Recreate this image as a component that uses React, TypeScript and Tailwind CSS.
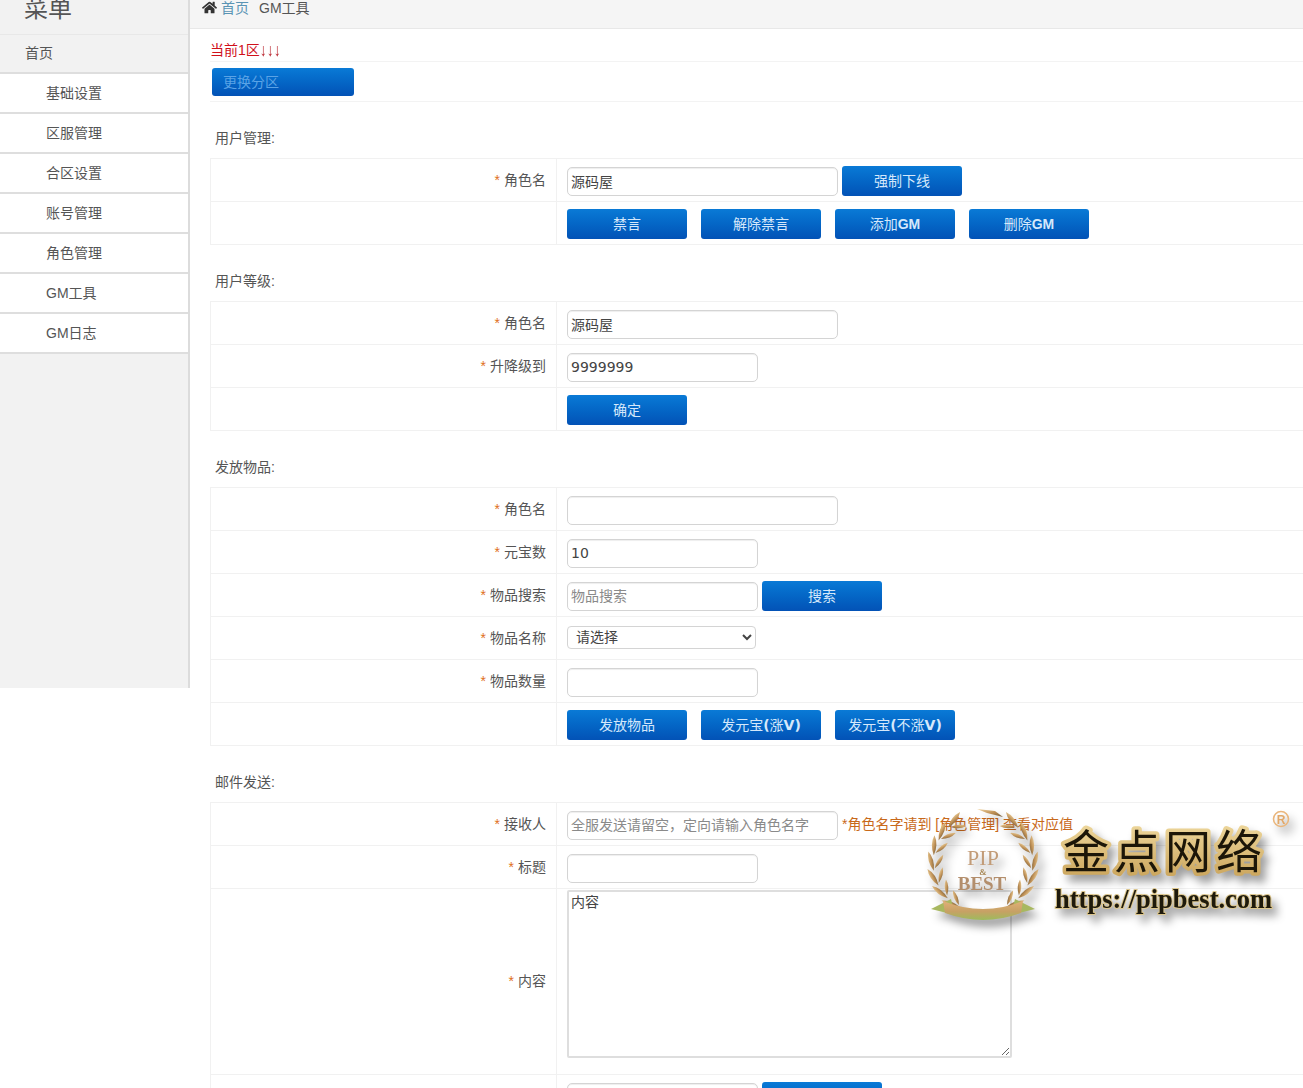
import React from 'react';
import { FaHome } from 'react-icons/fa';

const FONT = "font-['Liberation_Sans','Noto_Sans_CJK_SC',sans-serif]";

const menu = ['基础设置', '区服管理', '合区设置', '账号管理', '角色管理', 'GM工具', 'GM日志'];

const Btn = ({ children }: { children?: React.ReactNode }) => (
  <button className="h-[30px] w-[120px] shrink-0 rounded-[3px] bg-gradient-to-b from-[#0a7ad6] to-[#0352b6] text-center text-[14px] leading-[30px] text-[#d5e8fb]">
    {children}
  </button>
);

const B = ({ children }: { children: React.ReactNode }) => (
  <span className="font-['DejaVu_Sans'] font-bold">{children}</span>
);

const G = ({ children }: { children: React.ReactNode }) => <span className="font-bold">{children}</span>;

const TextInput = ({ value, placeholder, wide }: { value?: string; placeholder?: string; wide?: boolean }) => (
  <input
    readOnly
    value={value ?? ''}
    placeholder={placeholder}
    className={`h-[29px] rounded-[5px] border border-[#d4d4d4] bg-white px-[3px] font-['DejaVu_Sans','Noto_Sans_CJK_SC',sans-serif] text-[14px] text-[#444] shadow-[inset_0_1px_1px_#eeeeee] outline-none placeholder:text-[#8a8a8a] ${
      wide ? 'w-[271px]' : 'w-[191px]'
    }`}
  />
);

const Row = ({ label, children, tall }: { label?: string; children: React.ReactNode; tall?: boolean }) => (
  <div className={`flex border-b border-[#f1f1f1] ${tall ? 'h-[186px]' : 'h-[43px]'}`}>
    <div className="flex w-[346px] shrink-0 items-center justify-end border-r border-[#f1f1f1] pr-[10px] text-[14px] text-[#555]">
      {label && (
        <>
          <span className="mr-[4px] text-[#e0701a]">*</span>
          {label}
        </>
      )}
    </div>
    <div className="flex flex-1 items-center gap-[4px] pl-[10px] pt-[2px]">{children}</div>
  </div>
);

const Section = ({ title, children }: { title: string; children: React.ReactNode }) => (
  <section>
    <h3 className="flex h-[56px] items-center pl-[5px] pt-[16px] text-[14px] font-normal text-[#555]">{title}:</h3>
    <div className="w-[1200px] border-t border-l border-[#f1f1f1]">{children}</div>
  </section>
);

const ButtonRow = ({ labels }: { labels: React.ReactNode[] }) => (
  <Row>
    <div className="flex gap-[14px]">
      {labels.map((l, i) => (
        <Btn key={i}>{l}</Btn>
      ))}
    </div>
  </Row>
);

const leafPath = 'M0 -10 Q4.5 -1 0 10 Q-4.5 -1 0 -10 Z';
const arc = [34, 52, 70, 88, 106, 124, 142];

const WreathSide = () => (
  <>
    {arc.map((t) => {
      const a = (t * Math.PI) / 180;
      const sx = -Math.sin(a);
      const cy = -Math.cos(a);
      const rot = 90 - t;
      return (
        <g key={t}>
          <path d={leafPath} fill="url(#leaf)" transform={`translate(${sx * 52} ${cy * 52}) rotate(${rot - 18})`} />
          <path d={leafPath} fill="url(#leaf)" transform={`translate(${sx * 44} ${cy * 44}) rotate(${rot + 30}) scale(0.8)`} />
        </g>
      );
    })}
  </>
);

const Watermark = () => (
  <div className="pointer-events-none absolute left-[925px] top-[805px] h-[135px] w-[378px]">
    <svg width="378" height="135" viewBox="0 0 378 135" className="drop-shadow-[5px_7px_4px_rgba(0,0,0,0.38)]">
      <defs>
        <linearGradient id="leaf" x1="0" y1="0" x2="1" y2="1">
          <stop offset="0" stopColor="#f1d6a2" />
          <stop offset="0.55" stopColor="#bd8f55" />
          <stop offset="1" stopColor="#6f5836" />
        </linearGradient>
        <linearGradient id="ribbon" x1="0" y1="0" x2="0" y2="1">
          <stop offset="0" stopColor="#e0b078" />
          <stop offset="0.55" stopColor="#c7a165" />
          <stop offset="1" stopColor="#9dbb5c" />
        </linearGradient>
        <linearGradient id="gold" x1="0" y1="0" x2="0" y2="1">
          <stop offset="0" stopColor="#f3dfa6" />
          <stop offset="1" stopColor="#c9a258" />
        </linearGradient>
      </defs>
      <g transform="translate(58 58)">
        <WreathSide />
        <g transform="scale(-1 1)">
          <WreathSide />
        </g>
        <path d="M-6 -54 L12 -52 L20 -46 L4 -50 Z" fill="url(#leaf)" />
        <path d="M-52 46 L-32 36 L-28 52 Z M52 46 L32 36 L28 52 Z" fill="#a8b860" />
        <path d="M-40 38 Q0 54 40 38 L38 50 Q0 64 -38 50 Z" fill="url(#ribbon)" />
      </g>
      <text x="58" y="60" textAnchor="middle" fontFamily="'Liberation Serif',serif" fontSize="22" fill="#c29c78">PIP</text>
      <text x="58" y="70" textAnchor="middle" fontFamily="'Liberation Serif',serif" fontSize="9" fontWeight="700" fill="#a98a5a">&amp;</text>
      <text x="57" y="85" textAnchor="middle" fontFamily="'Liberation Serif',serif" fontSize="19" fontWeight="700" fill="#b38e6c">BEST</text>
      <text
        x="138"
        y="63"
        fontFamily="'Noto Sans CJK SC',sans-serif"
        fontSize="46"
        fontWeight="400"
        letterSpacing="5"
        fill="#1c1608"
        stroke="url(#gold)"
        strokeWidth="7"
        strokeLinejoin="round"
        paintOrder="stroke"
      >
        金点网络
      </text>
      <text x="130" y="103" fontFamily="'Liberation Serif',serif" fontSize="26.5" fontWeight="700" fill="#1e1a0c" stroke="#dcc68e" strokeWidth="2" paintOrder="stroke">
        https://pipbest.com
      </text>
      <circle cx="356" cy="14" r="7.5" fill="none" stroke="#eab67c" strokeWidth="1.6" />
      <text x="356" y="18.5" textAnchor="middle" fontFamily="'Liberation Sans',sans-serif" fontSize="12" fontWeight="700" fill="#e2a868">R</text>
    </svg>
  </div>
);

const App = () => {
  return (
    <div className={`relative flex h-[1088px] w-[1303px] overflow-hidden bg-white ${FONT}`}>
      <aside className="h-[688px] w-[190px] shrink-0 border-r-2 border-[#dcdcdc] bg-[#f2f2f2]">
        <div className="flex h-[35px] items-end overflow-hidden border-b border-[#e8e8e8] pb-[5px] pl-[24px] text-[24px] leading-[40px] text-[#555]">
          菜单
        </div>
        <div className="flex h-[39px] items-center border-b-2 border-[#dedede] pl-[25px] text-[14px] text-[#555]">首页</div>
        {menu.map((m) => (
          <div key={m} className="flex h-[40px] items-center border-b-2 border-[#dedede] bg-white pl-[46px] text-[14px] text-[#555]">
            {m}
          </div>
        ))}
      </aside>

      <main className="min-w-0 flex-1">
        <div className="flex h-[29px] items-start border-b border-[#e8e8e8] bg-[#f5f5f5] pl-[12px] text-[14px] leading-[16px]">
          <FaHome size={15} className="text-[#333]" />
          <span className="ml-[4px] text-[#5a94b4]">首页</span>
          <span className="ml-[10px] text-[#555]">GM工具</span>
        </div>

        <div className="pl-[20px]">
          <div className="flex h-[33px] w-[1200px] items-center border-b border-[#f3f3f3] pt-[10px] text-[14px] text-[#d0101a]">
            当前1区<span className="inline-block origin-center scale-y-125 font-bold text-[#b8202a]">↓↓↓</span>
          </div>
          <div className="flex h-[40px] w-[1200px] items-center border-b border-[#f3f3f3] pl-[2px]">
            <div className="flex h-[28px] w-[142px] items-center rounded-[3px] bg-gradient-to-b from-[#0a7ad6] to-[#0352b6] pl-[11px] pt-[1px] text-[14px] text-[#5aa3e6]">
              更换分区
            </div>
          </div>

          <Section title="用户管理">
            <Row label="角色名">
              <TextInput wide value="源码屋" />
              <Btn>强制下线</Btn>
            </Row>
            <ButtonRow
              labels={[
                '禁言',
                '解除禁言',
                <>
                  添加<G>GM</G>
                </>,
                <>
                  删除<G>GM</G>
                </>,
              ]}
            />
          </Section>

          <Section title="用户等级">
            <Row label="角色名">
              <TextInput wide value="源码屋" />
            </Row>
            <Row label="升降级到">
              <TextInput value="9999999" />
            </Row>
            <ButtonRow labels={['确定']} />
          </Section>

          <Section title="发放物品">
            <Row label="角色名">
              <TextInput wide />
            </Row>
            <Row label="元宝数">
              <TextInput value="10" />
            </Row>
            <Row label="物品搜索">
              <TextInput placeholder="物品搜索" />
              <Btn>搜索</Btn>
            </Row>
            <Row label="物品名称">
              <select className="h-[23px] w-[189px] -translate-y-[2px] rounded-[4px] border border-[#d4d4d4] bg-white pl-[4px] text-[14px] text-[#444]">
                <option>请选择</option>
              </select>
            </Row>
            <Row label="物品数量">
              <TextInput />
            </Row>
            <ButtonRow
              labels={[
                '发放物品',
                <>
                  发元宝<B>(</B>涨<B>V)</B>
                </>,
                <>
                  发元宝<B>(</B>不涨<B>V)</B>
                </>,
              ]}
            />
          </Section>

          <Section title="邮件发送">
            <Row label="接收人">
              <TextInput wide placeholder={'全服发送请留空\uFF0C定向请输入角色名字'} />
              <span className="-translate-y-[1px] text-[14px] text-[#c8691a]">*角色名字请到 [角色管理] 查看对应值</span>
            </Row>
            <Row label="标题">
              <TextInput />
            </Row>
            <Row label="内容" tall>
              <textarea
                readOnly
                defaultValue="内容"
                className="mb-[18px] h-[168px] w-[445px] rounded-[2px] border-2 border-[#dedede] px-[2px] text-[14px] text-[#444] outline-none"
              />
            </Row>
            <Row>
              <TextInput />
              <Btn />
            </Row>
          </Section>
        </div>
      </main>

      <Watermark />
    </div>
  );
};

export default App;
